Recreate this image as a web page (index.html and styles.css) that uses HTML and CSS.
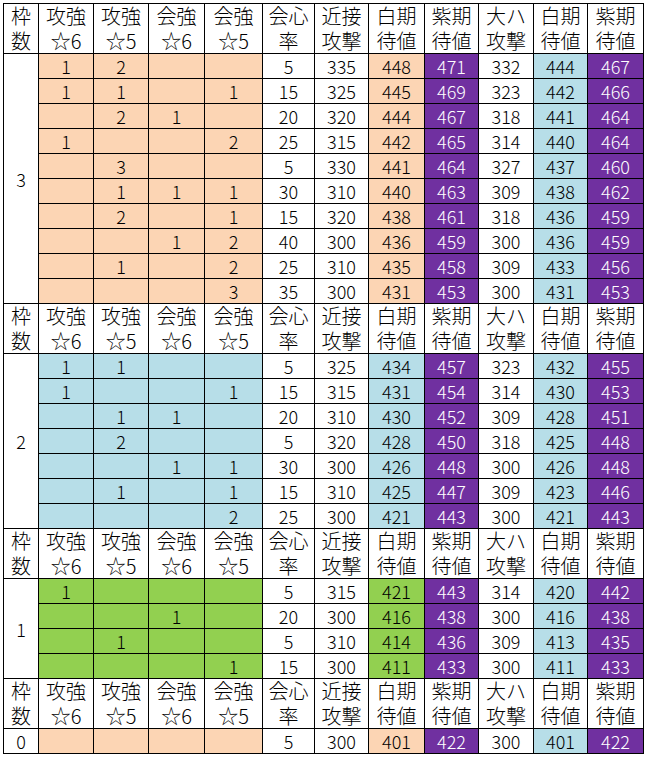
FILE: index.html
```html
<!DOCTYPE html>
<html lang="ja">
<head>
<meta charset="utf-8">
<link rel="stylesheet" href="styles.css">
</head>
<body>
<table class="sheet">
<colgroup>
<col class="c0"><col class="c1"><col class="c2"><col class="c3"><col class="c4"><col class="c5"><col class="c6"><col class="c7"><col class="c8"><col class="c9"><col class="c10"><col class="c11">
</colgroup>
<tbody>
<tr class="hd"><td>枠<br>数</td><td>攻強<br>☆6</td><td>攻強<br>☆5</td><td>会強<br>☆6</td><td>会強<br>☆5</td><td>会心<br>率</td><td>近接<br>攻撃</td><td>白期<br>待値</td><td>紫期<br>待値</td><td>大ハ<br>攻撃</td><td>白期<br>待値</td><td>紫期<br>待値</td></tr>
<tr><td class="num" rowspan="10">3</td><td class="p">1</td><td class="p">2</td><td class="p"></td><td class="p"></td><td>5</td><td>335</td><td class="p">448</td><td class="v">471</td><td>332</td><td class="b">444</td><td class="v">467</td></tr>
<tr><td class="p">1</td><td class="p">1</td><td class="p"></td><td class="p">1</td><td>15</td><td>325</td><td class="p">445</td><td class="v">469</td><td>323</td><td class="b">442</td><td class="v">466</td></tr>
<tr><td class="p"></td><td class="p">2</td><td class="p">1</td><td class="p"></td><td>20</td><td>320</td><td class="p">444</td><td class="v">467</td><td>318</td><td class="b">441</td><td class="v">464</td></tr>
<tr><td class="p">1</td><td class="p"></td><td class="p"></td><td class="p">2</td><td>25</td><td>315</td><td class="p">442</td><td class="v">465</td><td>314</td><td class="b">440</td><td class="v">464</td></tr>
<tr><td class="p"></td><td class="p">3</td><td class="p"></td><td class="p"></td><td>5</td><td>330</td><td class="p">441</td><td class="v">464</td><td>327</td><td class="b">437</td><td class="v">460</td></tr>
<tr><td class="p"></td><td class="p">1</td><td class="p">1</td><td class="p">1</td><td>30</td><td>310</td><td class="p">440</td><td class="v">463</td><td>309</td><td class="b">438</td><td class="v">462</td></tr>
<tr><td class="p"></td><td class="p">2</td><td class="p"></td><td class="p">1</td><td>15</td><td>320</td><td class="p">438</td><td class="v">461</td><td>318</td><td class="b">436</td><td class="v">459</td></tr>
<tr><td class="p"></td><td class="p"></td><td class="p">1</td><td class="p">2</td><td>40</td><td>300</td><td class="p">436</td><td class="v">459</td><td>300</td><td class="b">436</td><td class="v">459</td></tr>
<tr><td class="p"></td><td class="p">1</td><td class="p"></td><td class="p">2</td><td>25</td><td>310</td><td class="p">435</td><td class="v">458</td><td>309</td><td class="b">433</td><td class="v">456</td></tr>
<tr><td class="p"></td><td class="p"></td><td class="p"></td><td class="p">3</td><td>35</td><td>300</td><td class="p">431</td><td class="v">453</td><td>300</td><td class="b">431</td><td class="v">453</td></tr>

<tr class="hd"><td>枠<br>数</td><td>攻強<br>☆6</td><td>攻強<br>☆5</td><td>会強<br>☆6</td><td>会強<br>☆5</td><td>会心<br>率</td><td>近接<br>攻撃</td><td>白期<br>待値</td><td>紫期<br>待値</td><td>大ハ<br>攻撃</td><td>白期<br>待値</td><td>紫期<br>待値</td></tr>
<tr><td class="num" rowspan="7">2</td><td class="b">1</td><td class="b">1</td><td class="b"></td><td class="b"></td><td>5</td><td>325</td><td class="b">434</td><td class="v">457</td><td>323</td><td class="b">432</td><td class="v">455</td></tr>
<tr><td class="b">1</td><td class="b"></td><td class="b"></td><td class="b">1</td><td>15</td><td>315</td><td class="b">431</td><td class="v">454</td><td>314</td><td class="b">430</td><td class="v">453</td></tr>
<tr><td class="b"></td><td class="b">1</td><td class="b">1</td><td class="b"></td><td>20</td><td>310</td><td class="b">430</td><td class="v">452</td><td>309</td><td class="b">428</td><td class="v">451</td></tr>
<tr><td class="b"></td><td class="b">2</td><td class="b"></td><td class="b"></td><td>5</td><td>320</td><td class="b">428</td><td class="v">450</td><td>318</td><td class="b">425</td><td class="v">448</td></tr>
<tr><td class="b"></td><td class="b"></td><td class="b">1</td><td class="b">1</td><td>30</td><td>300</td><td class="b">426</td><td class="v">448</td><td>300</td><td class="b">426</td><td class="v">448</td></tr>
<tr><td class="b"></td><td class="b">1</td><td class="b"></td><td class="b">1</td><td>15</td><td>310</td><td class="b">425</td><td class="v">447</td><td>309</td><td class="b">423</td><td class="v">446</td></tr>
<tr><td class="b"></td><td class="b"></td><td class="b"></td><td class="b">2</td><td>25</td><td>300</td><td class="b">421</td><td class="v">443</td><td>300</td><td class="b">421</td><td class="v">443</td></tr>

<tr class="hd"><td>枠<br>数</td><td>攻強<br>☆6</td><td>攻強<br>☆5</td><td>会強<br>☆6</td><td>会強<br>☆5</td><td>会心<br>率</td><td>近接<br>攻撃</td><td>白期<br>待値</td><td>紫期<br>待値</td><td>大ハ<br>攻撃</td><td>白期<br>待値</td><td>紫期<br>待値</td></tr>
<tr><td class="num" rowspan="4">1</td><td class="g">1</td><td class="g"></td><td class="g"></td><td class="g"></td><td>5</td><td>315</td><td class="g">421</td><td class="v">443</td><td>314</td><td class="b">420</td><td class="v">442</td></tr>
<tr><td class="g"></td><td class="g"></td><td class="g">1</td><td class="g"></td><td>20</td><td>300</td><td class="g">416</td><td class="v">438</td><td>300</td><td class="b">416</td><td class="v">438</td></tr>
<tr><td class="g"></td><td class="g">1</td><td class="g"></td><td class="g"></td><td>5</td><td>310</td><td class="g">414</td><td class="v">436</td><td>309</td><td class="b">413</td><td class="v">435</td></tr>
<tr><td class="g"></td><td class="g"></td><td class="g"></td><td class="g">1</td><td>15</td><td>300</td><td class="g">411</td><td class="v">433</td><td>300</td><td class="b">411</td><td class="v">433</td></tr>

<tr class="hd"><td>枠<br>数</td><td>攻強<br>☆6</td><td>攻強<br>☆5</td><td>会強<br>☆6</td><td>会強<br>☆5</td><td>会心<br>率</td><td>近接<br>攻撃</td><td>白期<br>待値</td><td>紫期<br>待値</td><td>大ハ<br>攻撃</td><td>白期<br>待値</td><td>紫期<br>待値</td></tr>
<tr><td class="num">0</td><td class="p"></td><td class="p"></td><td class="p"></td><td class="p"></td><td>5</td><td>300</td><td class="p">401</td><td class="v">422</td><td>300</td><td class="b">401</td><td class="v">422</td></tr>
</tbody>
</table>
</body>
</html>
```
FILE: styles.css
```css
html, body {
  margin: 0;
  padding: 0;
  background: #ffffff;
}
body {
  padding: 3px;
  font-family: "Noto Sans CJK JP", "Liberation Sans", sans-serif;
  font-weight: 300;
  color: #000;
}
.sheet {
  border-collapse: collapse;
  table-layout: fixed;
  width: 641px;
}
.c0 { width: 35px; }
.c1 { width: 55px; }
.c2 { width: 55px; }
.c3 { width: 56px; }
.c4 { width: 58px; }
.c5 { width: 52px; }
.c6 { width: 54px; }
.c7 { width: 56px; }
.c8 { width: 54px; }
.c9 { width: 55px; }
.c10 { width: 54px; }
.c11 { width: 56px; }
.sheet td {
  border: 1px solid #000;
  padding: 0;
  height: 24px;
  line-height: 24px;
  font-size: 18px;
  text-align: center;
  vertical-align: middle;
  white-space: nowrap;
}
.sheet tr.hd td {
  height: 49px;
  font-size: 20px;
  line-height: 24.5px;
  background: #fff;
}
.p { background: #fcd5b4; }
.b { background: #b7dee8; }
.g { background: #92d050; }
.v { background: #7030a0; color: #fff; }
```
